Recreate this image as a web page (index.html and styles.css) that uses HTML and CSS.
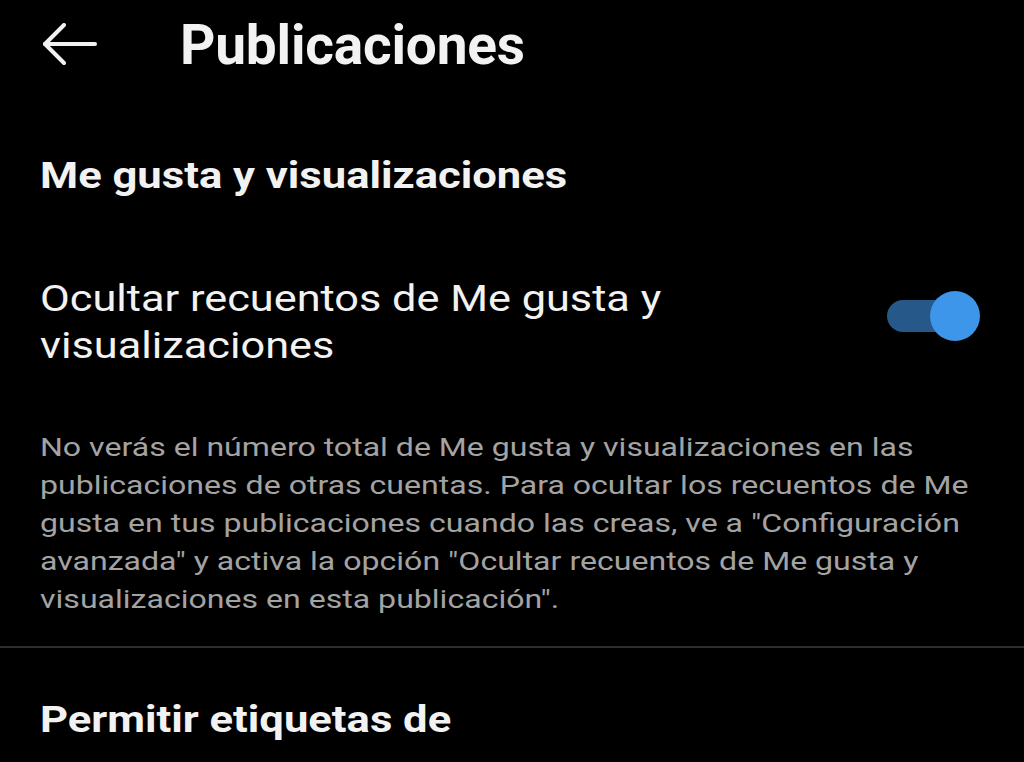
FILE: index.html
```html
<!DOCTYPE html>
<html lang="es">
<head>
<meta charset="utf-8">
<title>Publicaciones</title>
<link rel="stylesheet" href="styles.css">
</head>
<body>
<div class="screen">
  <header class="topbar">
    <button class="back" aria-label="Atrás">
      <svg width="58" height="46" viewBox="0 0 58 46" fill="none" stroke="#f2f2f2" stroke-width="4" stroke-linecap="round" stroke-linejoin="round">
        <path d="M55 21H5"/>
        <path d="M24 2L5 21L24 40"/>
      </svg>
    </button>
    <h1 class="title">Publicaciones</h1>
  </header>

  <section class="group">
    <h2 class="group-title">Me gusta y visualizaciones</h2>
    <div class="setting">
      <div class="setting-label">Ocultar recuentos de Me gusta y visualizaciones</div>
      <div class="switch on" role="switch" aria-checked="true">
        <span class="track"></span>
        <span class="knob"></span>
      </div>
    </div>
    <p class="help">No verás el número total de Me gusta y visualizaciones en las publicaciones de otras cuentas. Para ocultar los recuentos de Me gusta en tus publicaciones cuando las creas, ve a "Configuración avanzada" y activa la opción "Ocultar recuentos de Me gusta y visualizaciones en esta publicación".</p>
  </section>

  <hr class="divider">

  <section class="group">
    <h2 class="group-title second">Permitir etiquetas de</h2>
  </section>
</div>
</body>
</html>
```

FILE: styles.css
```css
html, body {
  margin: 0;
  padding: 0;
  background: #000;
}

.screen {
  width: 1024px;
  height: 762px;
  overflow: hidden;
  font-family: Roboto, "Noto Sans", sans-serif;
  color: #f2f2f2;
}

.topbar {
  display: flex;
  align-items: center;
  padding: 13px 40px 0 40px;
  height: 64px;
}

.back {
  background: none;
  border: 0;
  padding: 0;
  width: 58px;
  height: 46px;
  display: flex;
  margin-top: 2px;
}

.title {
  margin: 0 0 0 82px;
  font-size: 55px;
  line-height: 64px;
  font-weight: 700;
  letter-spacing: -0.2px;
}

.group {
  padding: 0 40px;
}

.group-title {
  margin: 77px 0 0 0;
  font-size: 36px;
  line-height: 44px;
  font-weight: 700;
  transform: scaleX(1.21);
  transform-origin: left top;
}

.group-title.second {
  margin-top: 50px;
}

.setting {
  display: flex;
  align-items: flex-start;
  margin-top: 77px;
}

.setting-label {
  width: 620px;
  font-size: 37px;
  line-height: 47px;
  font-weight: 400;
  transform: scaleX(1.17);
  transform-origin: left top;
}

.switch {
  position: relative;
  width: 93px;
  height: 50px;
  margin: 16px 4px 0 auto;
  flex-shrink: 0;
}

.switch .track {
  position: absolute;
  left: 0;
  top: 9px;
  width: 82px;
  height: 32px;
  border-radius: 16px;
  background: #27588a;
}

.switch .knob {
  position: absolute;
  right: 0;
  top: 0;
  width: 50px;
  height: 50px;
  border-radius: 50%;
  background: #3d96ea;
}

.help {
  width: 780px;
  margin: 59px 0 0 0;
  font-size: 26.5px;
  line-height: 38px;
  color: #a3a3a3;
  transform: scaleX(1.21);
  transform-origin: left top;
}

.divider {
  margin: 28px 0 0 0;
  border: 0;
  height: 2px;
  background: #2e2e2e;
}
```
